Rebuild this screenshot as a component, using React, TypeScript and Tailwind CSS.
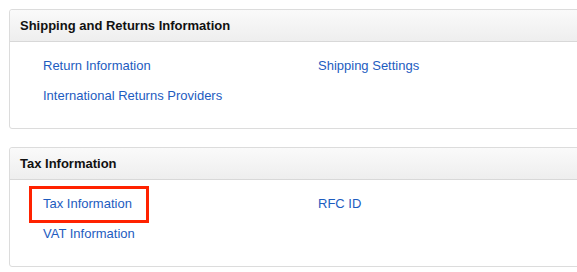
import React from "react";

type Item = { label: string; highlight?: boolean };

type Section = {
  title: string;
  left: Item[];
  right: Item[];
};

const sections: Section[] = [
  {
    title: "Shipping and Returns Information",
    left: [{ label: "Return Information" }, { label: "International Returns Providers" }],
    right: [{ label: "Shipping Settings" }],
  },
  {
    title: "Tax Information",
    left: [{ label: "Tax Information", highlight: true }, { label: "VAT Information" }],
    right: [{ label: "RFC ID" }],
  },
];

function LinkItem({ item }: { item: Item }) {
  return (
    <div className="h-[30px] flex items-center">
      <a href="#" className="relative text-[13px] text-[#1d5cbf] hover:underline">
        {item.label}
        {item.highlight && (
          <span className="absolute left-[-14px] right-[-17px] top-[-8px] bottom-[-9px] border-[3px] border-[#ff2200] pointer-events-none" />
        )}
      </a>
    </div>
  );
}

function Card({ section }: { section: Section }) {
  return (
    <div className="w-[600px] border border-[#dcdcdc] rounded-[3px] bg-white">
      <div className="h-[32px] flex items-center px-[10px] border-b border-[#d8d8d8] bg-gradient-to-b from-[#fafafa] to-[#eeeeee] rounded-t-[3px]">
        <h2 className="text-[13px] font-bold text-[#111111]">{section.title}</h2>
      </div>
      <div className="flex pl-[33px] pt-[9px] pb-[17px]">
        <div className="w-[275px]">
          {section.left.map((it) => (
            <LinkItem key={it.label} item={it} />
          ))}
        </div>
        <div>
          {section.right.map((it) => (
            <LinkItem key={it.label} item={it} />
          ))}
        </div>
      </div>
    </div>
  );
}

export default function App() {
  return (
    <div
      className="w-[577px] h-[272px] overflow-hidden bg-white pl-[9px] pt-[9px] flex flex-col gap-[18px]"
      style={{ fontFamily: '"Liberation Sans", Arial, sans-serif' }}
    >
      {sections.map((s) => (
        <Card key={s.title} section={s} />
      ))}
    </div>
  );
}
